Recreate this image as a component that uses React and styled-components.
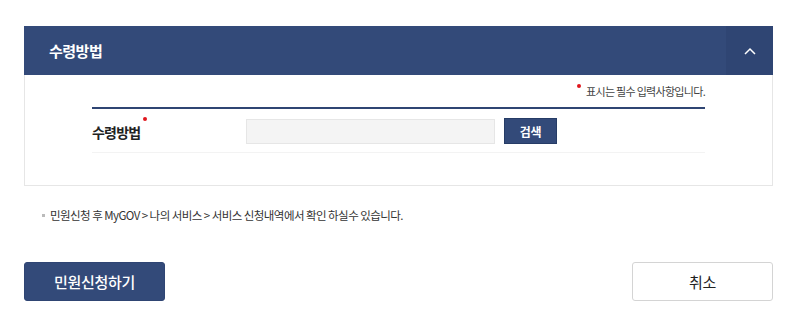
import React from "react";
import styled, { createGlobalStyle } from "styled-components";

const Global = createGlobalStyle`
  html, body { margin: 0; padding: 0; background: #fff; }
  body { font-family: "Noto Sans CJK KR", "Noto Sans", sans-serif; color: #222; }
  * { box-sizing: border-box; }
`;

const Page = styled.div`
  width: 749px;
  margin: 26px 0 0 24px;
`;

const Section = styled.section`
  border: 1px solid #e6e6e6;
  border-top: none;
`;

const Header = styled.div`
  height: 49px;
  background: #334a79;
  display: flex;
  align-items: stretch;
  justify-content: space-between;
  margin: 0 -1px;
`;

const Title = styled.h2`
  margin: 0;
  padding-left: 25px;
  display: flex;
  align-items: center;
  font-size: 15px;
  font-weight: 700;
  color: #fff;
  letter-spacing: -0.5px;
`;

const Toggle = styled.button`
  width: 47px;
  border: none;
  background: #2f4573;
  display: flex;
  align-items: center;
  justify-content: center;
  padding: 0;
  cursor: pointer;
`;

const Body = styled.div`
  padding: 7px 67px 32px 67px;
`;

const RequiredNote = styled.p`
  margin: 0;
  text-align: right;
  font-size: 11px;
  line-height: 18px;
  color: #444;
  letter-spacing: -0.7px;
`;

const Dot = styled.span`
  display: inline-block;
  position: relative;
  top: ${(p) => p.$top || 0}px;
  width: 4px;
  height: 4px;
  border-radius: 50%;
  background: #e0161d;
  vertical-align: top;
  margin-right: ${(p) => p.$mr || 0}px;
  margin-left: ${(p) => p.$ml || 0}px;
`;

const Table = styled.div`
  margin-top: 7px;
  border-top: 2px solid #2f4573;
`;

const Row = styled.div`
  display: grid;
  grid-template-columns: 154px 1fr;
  align-items: center;
  height: 44px;
  border-bottom: 1px solid #f3f3f3;
`;

const Label = styled.div`
  font-size: 14px;
  font-weight: 700;
  color: #222;
  letter-spacing: -0.8px;
  padding-top: 3px;
`;

const Field = styled.div`
  display: flex;
  align-items: center;
  gap: 9px;
  padding-top: 1px;
`;

const Input = styled.input`
  width: 249px;
  height: 25px;
  border: 1px solid #e6e6e6;
  background: #f4f4f4;
  padding: 0 8px;
  font: inherit;
  font-size: 13px;
  outline: none;
`;

const SmallButton = styled.button`
  width: 53px;
  height: 26px;
  border: 1px solid #263c66;
  background: #334a79;
  color: #fff;
  font-family: inherit;
  font-size: 12px;
  font-weight: 700;
  letter-spacing: -0.3px;
  padding: 0;
`;

const Notes = styled.ul`
  list-style: none;
  margin: 20px 0 0 0;
  padding: 0 0 0 18px;
`;

const NoteItem = styled.li`
  position: relative;
  padding-left: 8px;
  font-size: 11.5px;
  line-height: 18px;
  color: #333;
  letter-spacing: -0.55px;
  &::before {
    content: "";
    position: absolute;
    left: 0;
    top: 8px;
    width: 3px;
    height: 3px;
    background: #bbb;
  }
`;

const Actions = styled.div`
  display: flex;
  justify-content: space-between;
  margin-top: 38px;
`;

const BigButton = styled.button`
  width: 141px;
  height: 39px;
  border-radius: 3px;
  font-family: inherit;
  font-size: 15px;
  letter-spacing: -0.3px;
  cursor: pointer;
  border: 1px solid ${(p) => (p.$primary ? "#2f4573" : "#d4d4d4")};
  background: ${(p) => (p.$primary ? "#334a79" : "#fff")};
  color: ${(p) => (p.$primary ? "#fff" : "#222")};
  font-weight: ${(p) => (p.$primary ? 500 : 400)};
`;

export default function App() {
  return (
    <>
      <Global />
      <Page>
        <Section>
          <Header>
            <Title>수령방법</Title>
            <Toggle aria-label="접기">
              <svg width="12" height="8" viewBox="0 0 12 8">
                <path d="M1 7 L6 2 L11 7" fill="none" stroke="#fff" strokeWidth="1.5" />
              </svg>
            </Toggle>
          </Header>
          <Body>
            <RequiredNote>
              <Dot $top={2} $mr={5} />표시는 필수 입력사항입니다.
            </RequiredNote>
            <Table>
              <Row>
                <Label>
                  수령방법<Dot $top={-5} $ml={3} />
                </Label>
                <Field>
                  <Input type="text" />
                  <SmallButton>검색</SmallButton>
                </Field>
              </Row>
            </Table>
          </Body>
        </Section>
        <Notes>
          <NoteItem>민원신청 후 MyGOV &gt; 나의 서비스 &gt; 서비스 신청내역에서 확인 하실수 있습니다.</NoteItem>
        </Notes>
        <Actions>
          <BigButton $primary>민원신청하기</BigButton>
          <BigButton>취소</BigButton>
        </Actions>
      </Page>
    </>
  );
}
